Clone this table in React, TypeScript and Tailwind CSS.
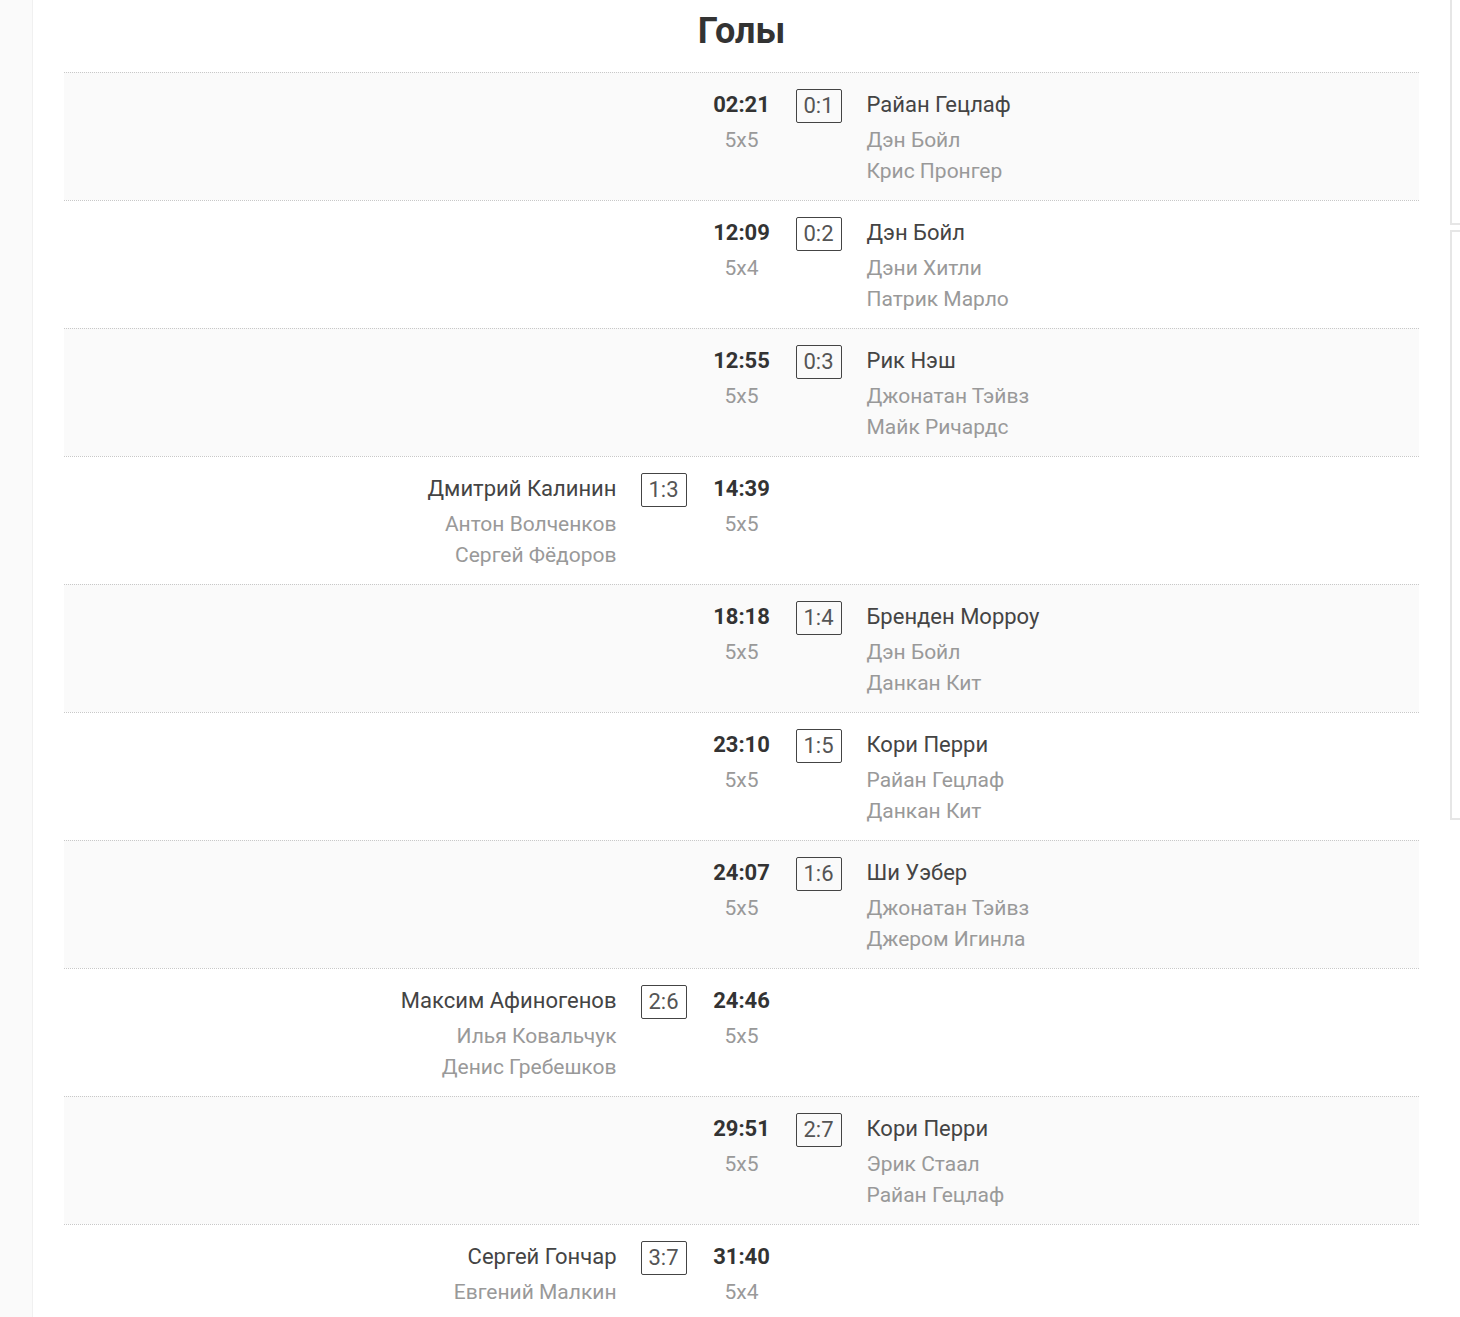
import React from "react";

type Goal = {
  side: "home" | "away";
  time: string;
  strength: string;
  score: string;
  scorer: string;
  assists: string[];
};

const goals: Goal[] = [
  { side: "away", time: "02:21", strength: "5x5", score: "0:1", scorer: "Райан Гецлаф", assists: ["Дэн Бойл", "Крис Пронгер"] },
  { side: "away", time: "12:09", strength: "5x4", score: "0:2", scorer: "Дэн Бойл", assists: ["Дэни Хитли", "Патрик Марло"] },
  { side: "away", time: "12:55", strength: "5x5", score: "0:3", scorer: "Рик Нэш", assists: ["Джонатан Тэйвз", "Майк Ричардс"] },
  { side: "home", time: "14:39", strength: "5x5", score: "1:3", scorer: "Дмитрий Калинин", assists: ["Антон Волченков", "Сергей Фёдоров"] },
  { side: "away", time: "18:18", strength: "5x5", score: "1:4", scorer: "Бренден Морроу", assists: ["Дэн Бойл", "Данкан Кит"] },
  { side: "away", time: "23:10", strength: "5x5", score: "1:5", scorer: "Кори Перри", assists: ["Райан Гецлаф", "Данкан Кит"] },
  { side: "away", time: "24:07", strength: "5x5", score: "1:6", scorer: "Ши Уэбер", assists: ["Джонатан Тэйвз", "Джером Игинла"] },
  { side: "home", time: "24:46", strength: "5x5", score: "2:6", scorer: "Максим Афиногенов", assists: ["Илья Ковальчук", "Денис Гребешков"] },
  { side: "away", time: "29:51", strength: "5x5", score: "2:7", scorer: "Кори Перри", assists: ["Эрик Стаал", "Райан Гецлаф"] },
  { side: "home", time: "31:40", strength: "5x4", score: "3:7", scorer: "Сергей Гончар", assists: ["Евгений Малкин"] },
];

function ScoreBox({ score }: { score: string }) {
  return (
    <div className="flex h-[34px] w-[46px] shrink-0 items-center justify-center rounded-[2px] border border-[#444] text-[22px] leading-none text-[#555]">
      {score}
    </div>
  );
}

function Names({ goal, align }: { goal: Goal; align: "left" | "right" }) {
  return (
    <div className={align === "right" ? "text-right" : "text-left"}>
      <div className="text-[22px] leading-[34px] text-[#444]">{goal.scorer}</div>
      <div className="mt-[3px]">
        {goal.assists.map((a, i) => (
          <div key={i} className="text-[21px] leading-[31px] text-[#999]">
            {a}
          </div>
        ))}
      </div>
    </div>
  );
}

function GoalRow({ goal, shaded }: { goal: Goal; shaded: boolean }) {
  return (
    <div
      className={`grid h-[128px] grid-cols-[1fr_82px_1fr] border-t border-dotted border-[#c8c8c8] pt-[15px] ${
        shaded ? "bg-[#fafafa]" : "bg-white"
      }`}
    >
      <div className="flex items-start justify-end">
        {goal.side === "home" && (
          <>
            <Names goal={goal} align="right" />
            <div className="ml-[24px] mr-[14px] mt-[1px]">
              <ScoreBox score={goal.score} />
            </div>
          </>
        )}
      </div>
      <div className="text-center">
        <div className="text-[22px] font-bold leading-[34px] text-[#333]">{goal.time}</div>
        <div className="mt-[3px] text-[21px] leading-[31px] text-[#999]">{goal.strength}</div>
      </div>
      <div className="flex items-start">
        {goal.side === "away" && (
          <>
            <div className="ml-[13px] mr-[25px] mt-[1px]">
              <ScoreBox score={goal.score} />
            </div>
            <Names goal={goal} align="left" />
          </>
        )}
      </div>
    </div>
  );
}

export default function App() {
  return (
    <div className="flex h-[1317px] overflow-hidden bg-white font-['Roboto',sans-serif]">
      <div className="w-[33px] shrink-0 border-r border-[#f0f0f0] bg-[#fafafa]" />
      <main className="flex-1 px-[31px]">
        <h2 className="h-[72px] pt-[8px] text-center text-[36px] font-bold leading-[46px] text-[#333]">Голы</h2>
        <div className="border-b border-dotted border-[#c8c8c8]">
          {goals.map((g, i) => (
            <GoalRow key={i} goal={g} shaded={i % 2 === 0} />
          ))}
        </div>
      </main>
      <aside className="flex w-[10px] shrink-0 flex-col gap-[5px]">
        <div className="h-[225px] border-b-2 border-l-2 border-[#e6e6e6]" />
        <div className="h-[590px] border-b-2 border-l-2 border-t-2 border-[#e6e6e6]" />
      </aside>
    </div>
  );
}
